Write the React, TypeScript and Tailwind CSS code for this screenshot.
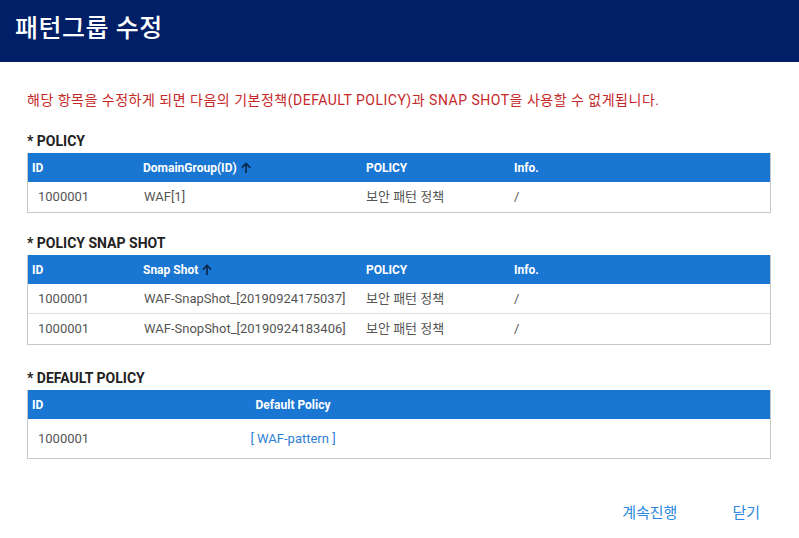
import { ReactNode } from 'react';

const font = { fontFamily: 'Roboto, "Noto Sans CJK KR", sans-serif' };

function SortArrow() {
  return (
    <svg width="12" height="12" viewBox="0 0 12 12" className="ml-[3px] inline-block">
      <path d="M6 11V1.5M1.8 5.7L6 1.5l4.2 4.2" stroke="#0b2747" strokeWidth="1.6" fill="none" />
    </svg>
  );
}

type Col = { label: ReactNode; width: string };

function HeaderRow({ cols }: { cols: Col[] }) {
  return (
    <div className="flex h-[29px] items-center bg-[#1976d2] text-[12px] font-bold text-white">
      {cols.map((c, i) => (
        <div key={i} className={`${c.width} flex items-center`}>
          {c.label}
        </div>
      ))}
    </div>
  );
}

function Row({ cells, last }: { cells: { text: ReactNode; width: string }[]; last?: boolean }) {
  return (
    <div
      className={`flex h-[30px] items-center text-[13px] text-[#555] ${last ? '' : 'border-b border-[#e0e0e0]'}`}
    >
      {cells.map((c, i) => (
        <div key={i} className={c.width}>
          {c.text}
        </div>
      ))}
    </div>
  );
}

const policyCols = ['w-[111px] pl-[4px]', 'w-[223px] pl-[4px]', 'w-[148px] pl-[4px]', 'flex-1 pl-[4px]'];
const bodyCols = ['w-[111px] pl-[10px]', 'w-[223px] pl-[5px]', 'w-[148px] pl-[4px]', 'flex-1 pl-[4px]'];

export default function App() {
  return (
    <div className="h-[538px] w-[799px] bg-white" style={font}>
      {/* Title bar */}
      <div className="flex h-[62px] items-center bg-[#001f66] pb-[4px] pl-[15px]">
        <h1 className="text-[25px] font-medium tracking-[0.5px] text-white">패턴그룹 수정</h1>
      </div>

      <div className="px-[27px] pr-[28px]">
        <p className="mt-[28px] text-[14px] tracking-[0.5px] text-[#c62828]">
          해당 항목을 수정하게 되면 다음의 기본정책(DEFAULT POLICY)과 SNAP SHOT을 사용할 수 없게됩니다.
        </p>

        {/* POLICY */}
        <h2 className="mt-[20px] text-[14px] font-bold text-[#222]">* POLICY</h2>
        <div className="mt-[1px] border border-t-0 border-[#c8c8c8]">
          <HeaderRow
            cols={[
              { label: 'ID', width: policyCols[0] },
              { label: <>DomainGroup(ID)<SortArrow /></>, width: policyCols[1] },
              { label: 'POLICY', width: policyCols[2] },
              { label: 'Info.', width: policyCols[3] },
            ]}
          />
          <Row
            last
            cells={[
              { text: '1000001', width: bodyCols[0] },
              { text: 'WAF[1]', width: bodyCols[1] },
              { text: '보안 패턴 정책', width: bodyCols[2] },
              { text: '/', width: bodyCols[3] },
            ]}
          />
        </div>

        {/* POLICY SNAP SHOT */}
        <h2 className="mt-[20px] text-[14px] font-bold text-[#222]">* POLICY SNAP SHOT</h2>
        <div className="mt-[1px] border border-t-0 border-[#c8c8c8]">
          <HeaderRow
            cols={[
              { label: 'ID', width: policyCols[0] },
              { label: <>Snap Shot<SortArrow /></>, width: policyCols[1] },
              { label: 'POLICY', width: policyCols[2] },
              { label: 'Info.', width: policyCols[3] },
            ]}
          />
          <Row
            cells={[
              { text: '1000001', width: bodyCols[0] },
              { text: 'WAF-SnapShot_[20190924175037]', width: bodyCols[1] },
              { text: '보안 패턴 정책', width: bodyCols[2] },
              { text: '/', width: bodyCols[3] },
            ]}
          />
          <Row
            last
            cells={[
              { text: '1000001', width: bodyCols[0] },
              { text: 'WAF-SnopShot_[20190924183406]', width: bodyCols[1] },
              { text: '보안 패턴 정책', width: bodyCols[2] },
              { text: '/', width: bodyCols[3] },
            ]}
          />
        </div>

        {/* DEFAULT POLICY */}
        <h2 className="mt-[23px] text-[14px] font-bold text-[#222]">* DEFAULT POLICY</h2>
        <div className="mt-[1px] border border-t-0 border-[#c8c8c8]">
          <div className="flex h-[29px] items-center bg-[#1976d2] text-[12px] font-bold text-white">
            <div className="w-[111px] pl-[4px]">ID</div>
            <div className="w-[308px] text-center">Default Policy</div>
          </div>
          <div className="flex h-[39px] items-center text-[13px] text-[#555]">
            <div className="w-[111px] pl-[10px]">1000001</div>
            <div className="w-[308px] text-center text-[#2f80d6]">[ WAF-pattern ]</div>
          </div>
        </div>

        {/* Actions */}
        <div className="mt-[43px] flex justify-end gap-[55px] pr-[11px] text-[15px] text-[#2a88e0]">
          <button type="button">계속진행</button>
          <button type="button">닫기</button>
        </div>
      </div>
    </div>
  );
}
